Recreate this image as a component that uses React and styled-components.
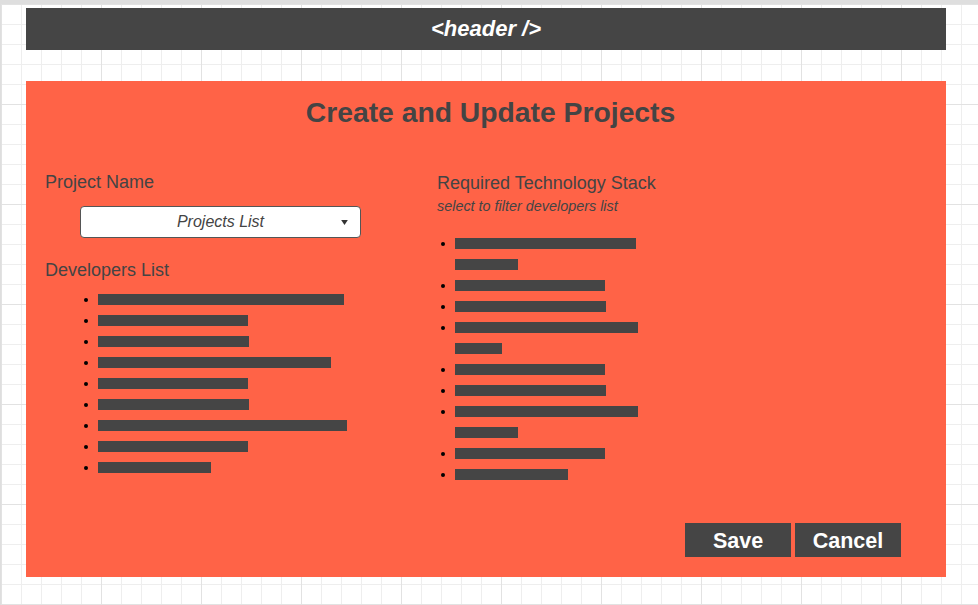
import React from 'react'
import styled, { createGlobalStyle } from 'styled-components'

const developers = [246, 150, 151, 233, 150, 151, 249, 150, 113]

const stack = [
  [181, 63],
  [150],
  [151],
  [183, 47],
  [150],
  [151],
  [183, 63],
  [150],
  [113],
]

function App() {
  return (
    <>
      <GlobalStyle />
      <Page>
        <Header>&lt;header /&gt;</Header>

        <Panel>
          <Title>Create and Update Projects</Title>

          <Columns>
            <Column>
              <Label>Project Name</Label>
              <Select>
                <SelectText>Projects List</SelectText>
                <Caret viewBox="0 0 8 6">
                  <polygon points="0,0 8,0 4,6" />
                </Caret>
              </Select>

              <Label $top={21}>Developers List</Label>
              <List $indent={38} $top={8}>
                {developers.map((w, i) => (
                  <Item key={i}>
                    <Dot />
                    <Bars>
                      <Bar style={{ width: w }} />
                    </Bars>
                  </Item>
                ))}
              </List>
            </Column>

            <Column $shift={1}>
              <Label>Required Technology Stack</Label>
              <Hint>select to filter developers list</Hint>
              <List $indent={3} $top={18}>
                {stack.map((lines, i) => (
                  <Item key={i}>
                    <Dot />
                    <Bars>
                      {lines.map((w, j) => <Bar key={j} style={{ width: w }} />)}
                    </Bars>
                  </Item>
                ))}
              </List>
            </Column>
          </Columns>

          <Footer>
            <Button>Save</Button>
            <Button>Cancel</Button>
          </Footer>
        </Panel>
      </Page>
    </>
  )
}

const GlobalStyle = createGlobalStyle`
  html, body {
    margin: 0;
    padding: 0;
    background: #fff;
  }
  body {
    font-family: "Liberation Sans", Arial, sans-serif;
  }
`

const Page = styled.div`
  box-sizing: border-box;
  min-height: 100vh;
  padding: 4px 0 0 25px;
  border-top: 4px solid #dedede;
  border-left: 1px solid #dedede;
  background-image:
    linear-gradient(to right, #e2e2e2 1px, transparent 1px),
    linear-gradient(to bottom, #e2e2e2 1px, transparent 1px),
    linear-gradient(to right, #eeeeee 1px, transparent 1px),
    linear-gradient(to bottom, #eeeeee 1px, transparent 1px);
  background-size: 100px 100px, 100px 100px, 20px 20px, 20px 20px;
`

const Header = styled.div`
  width: 920px;
  height: 42px;
  background: #454545;
  color: #fff;
  display: flex;
  align-items: center;
  justify-content: center;
  font-size: 22px;
  font-weight: bold;
  font-style: italic;
`

const Panel = styled.div`
  box-sizing: border-box;
  width: 920px;
  height: 496px;
  margin-top: 31px;
  padding: 15px 0 20px 0;
  background: #ff6347;
  color: #444;
  display: flex;
  flex-direction: column;
`

const Title = styled.h1`
  margin: 0;
  padding-left: 9px;
  text-align: center;
  font-size: 28.3px;
  line-height: 32px;
  font-weight: bold;
`

const Columns = styled.div`
  display: grid;
  grid-template-columns: 392px 1fr;
  margin-top: 43px;
  padding: 0 20px;
`

const Column = styled.div`
  display: flex;
  flex-direction: column;
  align-items: flex-start;
  padding-top: ${p => p.$shift || 0}px;
`

const Label = styled.div`
  font-size: 18px;
  line-height: 22px;
  margin: ${p => p.$top || 0}px 0 0 -1px;
`

const Hint = styled.div`
  font-size: 14.4px;
  line-height: 17px;
  font-style: italic;
  margin: 4px 0 0 -1px;
`

const Select = styled.div`
  box-sizing: border-box;
  position: relative;
  width: 281px;
  height: 32px;
  margin: 13px 0 0 34px;
  background: #fff;
  border: 1px solid #555;
  border-radius: 4px;
  display: flex;
  align-items: center;
  justify-content: center;
`

const SelectText = styled.span`
  font-size: 16px;
  font-style: italic;
  color: #444;
`

const Caret = styled.svg`
  position: absolute;
  right: 12px;
  top: 13px;
  width: 7px;
  height: 5px;
  fill: #333;
`

const List = styled.ul`
  list-style: none;
  margin: ${p => p.$top}px 0 0 0;
  padding: 0 0 0 ${p => p.$indent}px;
`

const Item = styled.li`
  display: flex;
  align-items: flex-start;
`

const Dot = styled.span`
  width: 4px;
  height: 4px;
  margin: 9px 10px 0 0;
  border-radius: 50%;
  background: #000;
  flex-shrink: 0;
`

const Bars = styled.div`
  display: flex;
  flex-direction: column;
`

const Bar = styled.span`
  display: block;
  height: 11px;
  margin: 5px 0;
  background: #454545;
`

const Footer = styled.div`
  margin-top: auto;
  padding-right: 45px;
  display: flex;
  justify-content: flex-end;
  gap: 4px;
`

const Button = styled.button`
  width: 106px;
  height: 34px;
  padding: 2px 0 0;
  border: none;
  background: #454545;
  color: #fff;
  font-family: "Liberation Sans", Arial, sans-serif;
  font-size: 21.5px;
  font-weight: bold;
`

export default App
